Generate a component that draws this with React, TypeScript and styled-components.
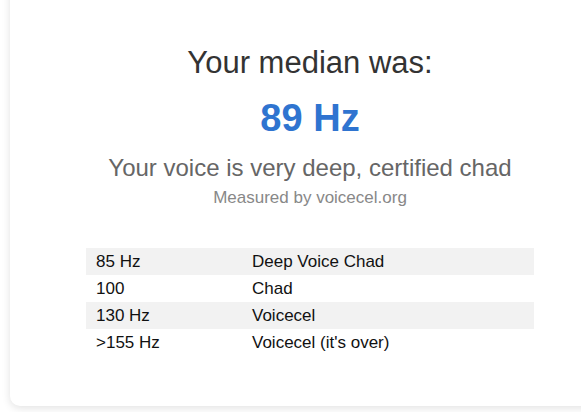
import React from "react";
import styled, { createGlobalStyle } from "styled-components";

const GlobalStyle = createGlobalStyle`
  html, body {
    margin: 0;
    padding: 0;
    background: #ffffff;
    overflow: hidden;
  }
  body {
    font-family: "Liberation Sans", Arial, sans-serif;
  }
`;

const Page = styled.div`
  width: 581px;
  height: 412px;
  overflow: hidden;
`;

const Card = styled.section`
  box-sizing: border-box;
  width: 600px;
  margin: -20px 0 0 10px;
  padding: 65px 20px 50px;
  background: #ffffff;
  border-radius: 10px;
  box-shadow: 0 2px 8px rgba(0, 0, 0, 0.12);
  display: flex;
  flex-direction: column;
  align-items: center;
`;

const Heading = styled.h2`
  margin: 0;
  font-size: 31px;
  line-height: 36px;
  font-weight: 400;
  color: #333333;
`;

const Value = styled.div`
  margin-top: 15px;
  font-size: 38px;
  line-height: 44px;
  font-weight: 700;
  color: #2f74d0;
`;

const Verdict = styled.p`
  margin: 14px 0 0;
  font-size: 24px;
  line-height: 28px;
  color: #666666;
`;

const Credit = styled.p`
  margin: 6px 0 0;
  font-size: 17px;
  line-height: 20px;
  color: #888888;
`;

const Table = styled.table`
  margin-top: 40px;
  width: 448px;
  table-layout: fixed;
  border-collapse: collapse;
  font-size: 17px;
  color: #111111;
`;

const FirstCol = styled.col`
  width: 156px;
`;

const Row = styled.tr<{ $shaded: boolean }>`
  background: ${(p) => (p.$shaded ? "#f2f2f2" : "transparent")};
`;

const Cell = styled.td`
  padding: 4px 10px;
  line-height: 19px;
  text-align: left;
`;

const rows = [
  ["85 Hz", "Deep Voice Chad"],
  ["100", "Chad"],
  ["130 Hz", "Voicecel"],
  [">155 Hz", "Voicecel (it's over)"],
];

export default function App() {
  return (
    <Page>
      <GlobalStyle />
      <Card>
        <Heading>Your median was:</Heading>
        <Value>89 Hz</Value>
        <Verdict>Your voice is very deep, certified chad</Verdict>
        <Credit>Measured by voicecel.org</Credit>
        <Table>
          <colgroup>
            <FirstCol />
            <col />
          </colgroup>
          <tbody>
            {rows.map(([hz, label], i) => (
              <Row key={hz} $shaded={i % 2 === 0}>
                <Cell>{hz}</Cell>
                <Cell>{label}</Cell>
              </Row>
            ))}
          </tbody>
        </Table>
      </Card>
    </Page>
  );
}
